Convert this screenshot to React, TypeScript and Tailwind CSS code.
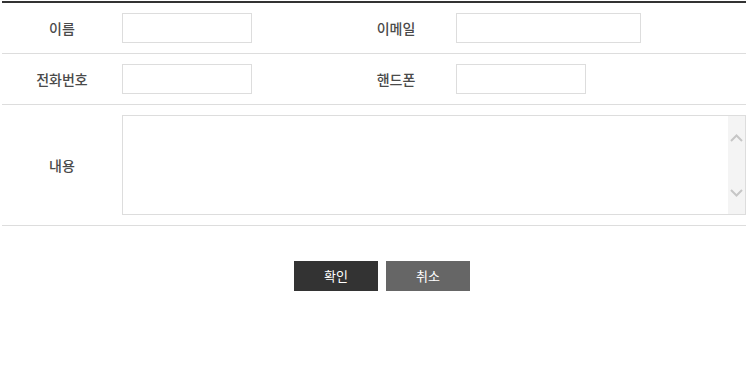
const font = { fontFamily: '"Noto Sans CJK KR", "Noto Sans", sans-serif' };

function Label({ text }: { text: string }) {
  return (
    <div className="flex items-center justify-center text-[14px] font-medium text-[#4a4a4a]">
      {text}
    </div>
  );
}

function Field({ width }: { width: string }) {
  return (
    <div className="flex items-center">
      <input type="text" className={`h-[30px] border border-[#ddd] bg-white outline-none ${width}`} />
    </div>
  );
}

function Chevron({ down }: { down?: boolean }) {
  return (
    <svg width="17" height="10" viewBox="0 0 17 10" className="block">
      <polyline
        points={down ? "3,2 8.5,7.5 14,2" : "3,8 8.5,2.5 14,8"}
        fill="none"
        stroke="#c6c6c6"
        strokeWidth="2"
      />
    </svg>
  );
}

export default function App() {
  return (
    <div className="min-h-screen bg-white pt-px" style={font}>
      <div className="mx-[2px] border-t-2 border-[#333]">
        {/* 이름 / 이메일 */}
        <div className="grid h-[51px] grid-cols-[120px_214px_120px_1fr] border-b border-[#ddd]">
          <Label text="이름" />
          <Field width="w-[130px]" />
          <Label text="이메일" />
          <Field width="w-[185px]" />
        </div>
        {/* 전화번호 / 핸드폰 */}
        <div className="grid h-[51px] grid-cols-[120px_214px_120px_1fr] border-b border-[#ddd]">
          <Label text="전화번호" />
          <Field width="w-[130px]" />
          <Label text="핸드폰" />
          <Field width="w-[130px]" />
        </div>
        {/* 내용 */}
        <div className="grid h-[121px] grid-cols-[120px_1fr] border-b border-[#ddd]">
          <Label text="내용" />
          <div className="flex items-center">
            <div className="flex h-[100px] w-full border border-[#ddd] bg-white">
              <textarea className="flex-1 resize-none outline-none" />
              <div className="flex w-[17px] flex-col items-center justify-between bg-[#f4f4f4] pt-[17px] pb-[16px]">
                <Chevron />
                <Chevron down />
              </div>
            </div>
          </div>
        </div>
      </div>

      <div className="mt-[35px] flex justify-center gap-[8px] pl-[16px]">
        <button className="h-[30px] w-[84px] bg-[#333] text-[13px] text-white">확인</button>
        <button className="h-[30px] w-[84px] bg-[#666] text-[13px] text-white">취소</button>
      </div>
    </div>
  );
}
